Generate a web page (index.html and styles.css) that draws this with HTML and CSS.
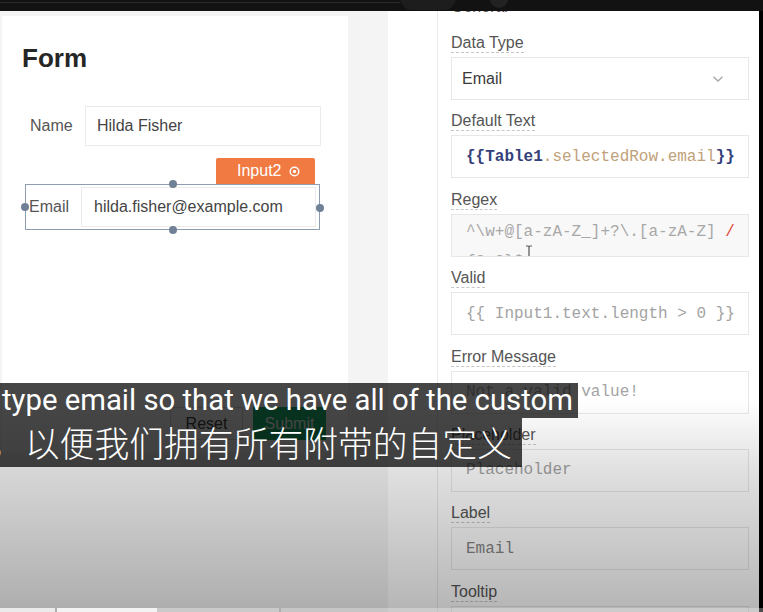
FILE: index.html
```html
<!DOCTYPE html>
<html lang="en">
<head>
<meta charset="utf-8">
<title>Form editor</title>
<link rel="stylesheet" href="styles.css">
</head>
<body>
<div class="topbar">
  <span class="tb-line"></span>
  <span class="tb-pill"></span>
  <span class="tb-dot"></span>
</div>
<div class="main">
  <div class="canvas">
    <div class="card">
      <h1 class="form-title">Form</h1>
      <div class="widget name-widget">
        <span class="w-label">Name</span>
        <div class="w-input">Hilda Fisher</div>
      </div>
      <div class="widget email-widget">
        <div class="tag">Input2
          <svg class="tag-icon" width="11" height="11" viewBox="0 0 11 11"><circle cx="5.5" cy="5.5" r="4.3" fill="none" stroke="#fff" stroke-width="1.4"/><circle cx="5.5" cy="5.5" r="1.7" fill="#fff"/></svg>
        </div>
        <span class="handle h-top"></span>
        <span class="handle h-bottom"></span>
        <span class="handle h-left"></span>
        <span class="handle h-right"></span>
        <span class="w-label">Email</span>
        <div class="w-input">hilda.fisher@example.com</div>
      </div>
      <div class="buttons">
        <button class="btn btn-reset">Reset</button>
        <button class="btn btn-submit">Submit</button>
      </div>
    </div>
  </div>
  <div class="panel">
    <div class="gutter"></div>
    <div class="panel-body">
      <div class="section-title">General</div>

      <div class="field">
        <div class="f-label"><span>Data Type</span></div>
        <div class="f-box select">
          <span>Email</span>
          <svg class="chev" width="12" height="8" viewBox="0 0 12 8"><path d="M1.5 1.8 L6 6 L10.5 1.8" fill="none" stroke="#a8a8a8" stroke-width="1.4"/></svg>
        </div>
      </div>

      <div class="field">
        <div class="f-label"><span>Default Text</span></div>
        <div class="f-box code"><span class="c-brace">{{Table1</span><span class="c-prop">.selectedRow.email</span><span class="c-brace">}}</span></div>
      </div>

      <div class="field">
        <div class="f-label"><span>Regex</span></div>
        <div class="f-box code regex"><div class="rx-line">^\w+@[a-zA-Z_]+?\.[a-zA-Z] <span class="rx-red">/</span></div><div class="rx-line">{2,3}$</div><svg class="ibeam" width="8" height="15" viewBox="0 0 8 15"><path d="M1 1 H3 Q4 1 4 2.5 V12.5 Q4 14 3 14 H1 M7 1 H5 Q4 1 4 2.5 M4 12.5 Q4 14 5 14 H7" fill="none" stroke="#555" stroke-width="1.2"/></svg></div>
      </div>

      <div class="field">
        <div class="f-label"><span>Valid</span></div>
        <div class="f-box code muted">{{ Input1.text.length &gt; 0 }}</div>
      </div>

      <div class="field">
        <div class="f-label"><span>Error Message</span></div>
        <div class="f-box code muted">Not a valid value!</div>
      </div>

      <div class="field">
        <div class="f-label"><span>Placeholder</span></div>
        <div class="f-box code muted">Placeholder</div>
      </div>

      <div class="field">
        <div class="f-label"><span>Label</span></div>
        <div class="f-box code value">Email</div>
      </div>

      <div class="field">
        <div class="f-label"><span>Tooltip</span></div>
        <div class="f-box code"></div>
      </div>
    </div>
  </div>
  <div class="edge"></div>
</div>

<div class="fade"></div>

<div class="captions">
  <div class="cap cap-en">type email so that we have all of the custom</div>
  <div class="cap cap-zh">，以便我们拥有所有附带的自定义</div>
</div>

<div class="progress">
  <span class="seg seg-a"></span>
  <span class="seg seg-b"></span>
  <span class="seg seg-c"></span>
  <span class="seg seg-d"></span>
</div>
</body>
</html>
```

FILE: styles.css
```css
* { box-sizing: border-box; }

html, body {
  margin: 0;
  padding: 0;
}

body {
  width: 763px;
  height: 612px;
  overflow: hidden;
  position: relative;
  background: #f4f4f4;
  font-family: "Liberation Sans", Arial, sans-serif;
  color: #333;
}

/* ---------- top video bar ---------- */
.topbar {
  height: 11px;
  background: #121212;
  position: relative;
  overflow: hidden;
}
.tb-line {
  position: absolute;
  left: 0;
  top: 2px;
  width: 400px;
  height: 1px;
  background: #2c2c2c;
}
.tb-pill {
  position: absolute;
  left: 400px;
  top: -14px;
  width: 56px;
  height: 24px;
  border-radius: 12px;
  background: #1d1d1d;
}
.tb-dot {
  position: absolute;
  left: 490px;
  top: -10px;
  width: 18px;
  height: 18px;
  border-radius: 50%;
  background: #222;
}

/* ---------- layout ---------- */
.main {
  display: flex;
  height: 601px;
}

.canvas {
  width: 388px;
  flex: none;
  background: #f4f4f4;
  padding: 5px 0 0 2px;
}

.card {
  width: 346px;
  height: 436px;
  background: #fff;
  display: flex;
  flex-direction: column;
  align-items: flex-start;
}

.form-title {
  margin: 27px 0 0 20px;
  font-size: 26px;
  line-height: 30px;
  font-weight: 700;
  color: #262626;
}

.widget {
  display: flex;
  align-items: center;
  position: relative;
}

.w-label {
  font-size: 16px;
  color: #555;
  flex: none;
}

.w-input {
  flex: 1;
  height: 40px;
  border: 1px solid #ebebeb;
  display: flex;
  align-items: center;
  font-size: 16px;
  color: #444;
  background: #fff;
}

.name-widget {
  margin: 33px 0 0 24px;
  width: 295px;
  height: 40px;
  padding-left: 4px;
}
.name-widget .w-label { width: 55px; }
.name-widget .w-input { padding-left: 11px; }

.email-widget {
  margin: 38px 0 0 23px;
  width: 295px;
  height: 46px;
  border: 1px solid #8f9db0;
  padding: 2px 3px 2px 3px;
}
.email-widget .w-label { width: 52px; }
.email-widget .w-input { padding-left: 12px; }

.tag {
  position: absolute;
  right: 4px;
  bottom: calc(100% + 1px);
  width: 99px;
  height: 26px;
  background: #f07a42;
  border-radius: 2px 2px 0 0;
  color: #fff;
  font-size: 16px;
  display: flex;
  align-items: center;
  padding-left: 21px;
  gap: 8px;
}
.tag-icon { flex: none; }

.handle {
  position: absolute;
  width: 8px;
  height: 8px;
  border-radius: 50%;
  background: #6f8097;
  z-index: 2;
}
.h-top { left: 143px; top: -5px; }
.h-bottom { left: 143px; bottom: -5px; }
.h-left { left: -5px; top: 18px; }
.h-right { right: -5px; top: 19px; }

.buttons {
  display: flex;
  gap: 10px;
  margin: 177px 0 0 168px;
}
.btn {
  width: 73px;
  height: 33px;
  font-family: "Liberation Sans", Arial, sans-serif;
  font-size: 16px;
  border-radius: 0;
  padding: 0;
}
.btn-reset {
  background: #fff;
  border: 1px solid #d6d6d6;
  color: #333;
}
.btn-submit {
  background: #03b365;
  border: 1px solid #03b365;
  color: #fff;
}

/* ---------- property panel ---------- */
.panel {
  width: 371px;
  flex: none;
  background: #fff;
  display: flex;
  overflow: hidden;
}

.gutter {
  width: 50px;
  flex: none;
  border-right: 1px solid #e9e9e9;
}

.panel-body {
  flex: 1;
  padding: 0 11px 0 13px;
}

.section-title {
  margin: -14px 0 16px;
  height: 20px;
  line-height: 20px;
  font-size: 16px;
  color: #555;
}

.field {
  margin-bottom: 11.4px;
}

.f-label {
  height: 20px;
  margin-bottom: 4px;
}
.f-label span {
  display: inline-block;
  font-size: 16px;
  line-height: 19px;
  color: #555;
  border-bottom: 1px dashed #c6c6c6;
}

.f-box {
  height: 43px;
  border: 1px solid #e7e7e7;
  background: #fff;
  display: flex;
  align-items: center;
  padding: 0 13px;
  overflow: hidden;
  position: relative;
}

.select {
  padding-left: 10px;
  justify-content: space-between;
  font-size: 16px;
  color: #3a3a3a;
}
.chev { margin-right: 11px; }

.code {
  font-family: "Liberation Mono", "Courier New", monospace;
  font-size: 16px;
  padding-left: 14px;
  white-space: pre;
}

.c-brace { color: #34407a; font-weight: 700; }
.c-prop { color: #bfa17a; }

.regex {
  background: #f8f8f8;
  display: block;
  padding-top: 2px;
  color: #a8a8a8;
}
.rx-line { line-height: 30px; height: 30px; }
.rx-red { color: #e04b3a; }
.ibeam {
  position: absolute;
  left: 73px;
  top: 30px;
}

.muted { color: #a3a3a3; }
.value { color: #858585; }

.edge {
  width: 4px;
  flex: none;
  background: #000;
}

/* ---------- video overlays ---------- */
.fade {
  position: absolute;
  left: 0;
  right: 0;
  top: 400px;
  height: 212px;
  background: linear-gradient(to bottom,
    rgba(0,0,0,0) 0%,
    rgba(0,0,0,0.12) 33%,
    rgba(0,0,0,0.29) 100%);
  pointer-events: none;
}

.captions {
  position: absolute;
  left: 0;
  top: 383px;
  display: flex;
  flex-direction: column;
  align-items: flex-start;
}

.cap {
  background: rgba(8, 8, 8, 0.75);
  color: #fff;
  white-space: nowrap;
}

.cap-en {
  font-family: Roboto, "Noto Sans", sans-serif;
  font-size: 29.3px;
  line-height: 35px;
  height: 35px;
  padding: 0 5px 0 2px;
}

.cap-zh {
  font-family: "Noto Sans CJK SC", "Noto Sans", sans-serif;
  font-weight: 300;
  font-size: 34.8px;
  line-height: 49px;
  height: 49px;
  padding: 0 10px 0 0;
  text-indent: -10px;
  overflow: hidden;
}

.progress {
  position: absolute;
  left: 0;
  right: 0;
  bottom: 0;
  height: 4px;
  display: flex;
  gap: 2px;
}
.seg { height: 4px; }
.seg-a { width: 55px; background: rgba(255,255,255,0.75); }
.seg-b { width: 100px; background: rgba(255,255,255,0.85); margin-left: 0; }
.seg-c { width: 122px; background: rgba(255,255,255,0.35); margin-left: -2px; }
.seg-d { flex: 1; background: rgba(255,255,255,0.3); }
```
